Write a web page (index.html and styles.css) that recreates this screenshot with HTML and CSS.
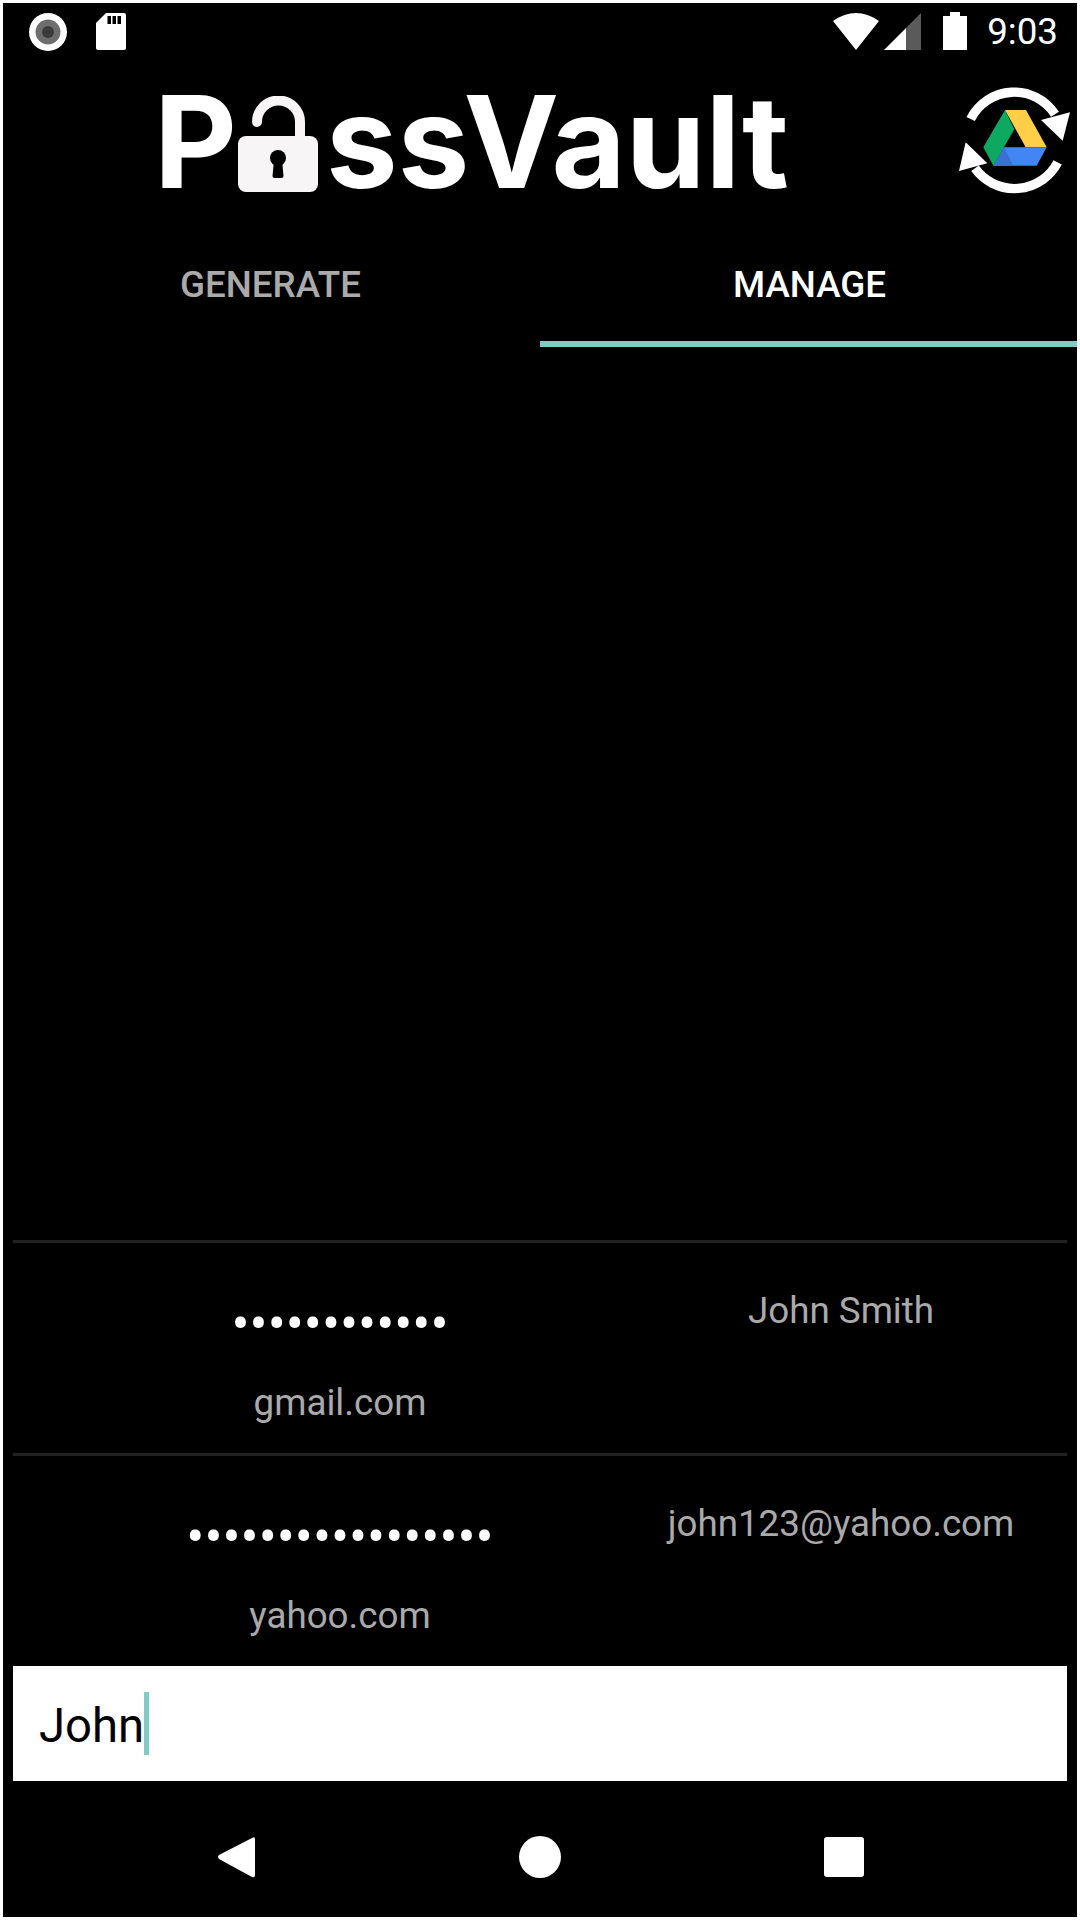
FILE: index.html
```html
<!DOCTYPE html>
<html lang="en">

<head>
    <meta charset="UTF-8">
    <title>PassVault</title>
    <link rel="stylesheet" href="styles.css">
</head>

<body>
    <div class="screen">

        <div class="status-bar">
            <svg class="icon-record" width="38" height="38" viewBox="0 0 38 38">
                <circle cx="19" cy="19" r="19" fill="#fff" />
                <circle cx="19" cy="19" r="12.5" fill="#6e6e6e" />
                <circle cx="19" cy="19" r="6" fill="#3a3a3a" />
            </svg>
            <svg class="icon-sd" width="30" height="37" viewBox="0 0 30 37">
                <path d="M10 0H28Q30 0 30 2V35Q30 37 28 37H2Q0 37 0 35V10Z" fill="#fff" />
                <path d="M11.5 3h3.5v8h-3.5zM16.5 3h3.5v8h-3.5zM21.5 3h3.5v8h-3.5z" fill="#000" />
            </svg>
            <svg class="icon-wifi" width="46" height="37" viewBox="0 0 46 37">
                <path d="M0 8Q23 -8 46 8L23 37Z" fill="#fff" />
            </svg>
            <svg class="icon-signal" width="37" height="37" viewBox="0 0 37 37">
                <path d="M0 37L22 15V37Z" fill="#fff" />
                <path d="M22 15L37 0V37H22Z" fill="#5a5a5a" />
            </svg>
            <svg class="icon-battery" width="24" height="38" viewBox="0 0 24 38">
                <path d="M7 0H17V4H24V38H0V4H7Z" fill="#fff" />
            </svg>
            <span class="clock">9:03</span>
        </div>

        <div class="header">
            <div class="logo">
                <span>P</span>
                <svg class="logo-lock" width="80" height="96" viewBox="0 0 80 96">
                    <path d="M19 26A21.5 21.5 0 0 1 62 26V44" fill="none" stroke="#f7f5f6" stroke-width="10" stroke-linecap="round" />
                    <rect y="40" width="80" height="56" rx="8" fill="#f7f5f6" />
                    <circle cx="40" cy="62" r="8" fill="#000" />
                    <path d="M36 64L34.5 80Q34.5 82 36.5 82H43.5Q45.5 82 45.5 80L44 64Z" fill="#000" />
                </svg>
                <span>ssVault</span>
            </div>
            <svg class="sync" width="118" height="113" viewBox="525 255 354 339">
                <path d="M572 357A146 146 0 0 1 825 343" fill="none" stroke="#fff" stroke-width="28" />
                <path d="M870 337L783 360L848 422Z" fill="#fff" />
                <path d="M833 487A146 146 0 0 1 585 505" fill="none" stroke="#fff" stroke-width="28" />
                <path d="M557 427L537 513L622 490Z" fill="#fff" />
                <path d="M675 330L610 442L640 497L703 388Z" fill="#0da960" />
                <path d="M675 330H738L800 442H737Z" fill="#ffcf48" />
                <path d="M672 442H800L770 497H640Z" fill="#4285f4" />
                <path d="M672 442L640 497H700Z" fill="#3b6fd4" />
            </svg>
        </div>

        <div class="tabs">
            <div class="tab tab-left">GENERATE</div>
            <div class="tab tab-right active">MANAGE</div>
        </div>

        <div class="list">
            <div class="row">
                <div class="row-left">
                    <div class="password">••••••••••••</div>
                    <div class="site">gmail.com</div>
                </div>
                <div class="login">John Smith</div>
            </div>
            <div class="row">
                <div class="row-left">
                    <div class="password">•••••••••••••••••</div>
                    <div class="site">yahoo.com</div>
                </div>
                <div class="login">john123@yahoo.com</div>
            </div>
        </div>

        <div class="search">
            <span class="search-text">John</span>
            <span class="caret"></span>
        </div>

        <div class="nav">
            <svg class="nav-back" width="38" height="42" viewBox="0 0 38 42">
                <path d="M35 2L2 19Q0 21 2 23L35 41Q38 42 38 39V3Q38 0 35 2Z" fill="#fff" />
            </svg>
            <div class="nav-home"></div>
            <div class="nav-recent"></div>
        </div>

    </div>
</body>

</html>
```

FILE: styles.css
```css
* {
    padding: 0;
    margin: 0;
    box-sizing: border-box;
}

body {
    width: 1080px;
    height: 1920px;
    padding: 3px;
    background: #fff;
    font-family: Roboto, sans-serif;
}

.screen {
    height: 1914px;
    display: flex;
    flex-direction: column;
    background: #000;
    overflow: hidden;
}

.status-bar {
    height: 72px;
    display: flex;
    align-items: flex-start;
    padding: 10px 19px 0 26px;
    color: #fff;
}

.icon-sd {
    margin-left: 29px;
}

.icon-wifi {
    margin-left: auto;
}

.icon-signal {
    margin-left: 5px;
}

.icon-battery {
    margin-left: 22px;
    margin-top: -1px;
}

.clock {
    margin-left: 20px;
    font-size: 36.75px;
    line-height: 37px;
}

.header {
    height: 155px;
    display: flex;
    justify-content: space-between;
    align-items: flex-start;
    padding: 10px 4px 0 151px;
}

.logo {
    display: flex;
    align-items: flex-start;
    margin-top: -8px;
    font-family: Inter, sans-serif;
    font-weight: 700;
    font-size: 128px;
    line-height: 130px;
    color: #fff;
}

.logo-lock {
    margin: 19px 8px 0 1px;
}

.tabs {
    height: 117px;
    display: grid;
    grid-template-columns: 537px 537px;
    font-size: 36.75px;
    font-weight: 500;
    color: #aaa;
}

.tab {
    text-align: center;
    padding-top: 34px;
    line-height: 42px;
}

.tab-left {
    padding-right: 2px;
}

.tab-right {
    padding-left: 2px;
}

.tab.active {
    color: #fff;
    border-bottom: 6px solid #80cbc4;
}

.list {
    flex: 1;
    display: flex;
    flex-direction: column;
    justify-content: flex-end;
    padding: 0 10px;
}

.row {
    height: 213px;
    display: grid;
    grid-template-columns: 654px 348px;
    border-top: 3px solid #222;
    font-size: 36.75px;
    line-height: 42px;
    color: #aaa;
    text-align: center;
}

.password {
    margin-top: 60px;
    color: #fff;
    font-size: 53.6px;
    white-space: nowrap;
}

.site {
    margin-top: 37px;
}

.login {
    margin-top: 47px;
    white-space: nowrap;
}

.search {
    height: 115px;
    margin: 0 10px;
    display: flex;
    align-items: flex-start;
    padding: 26px 0 0 26px;
    background: #fff;
    color: #000;
}

.search-text {
    margin-top: 4px;
    font-size: 47.25px;
    line-height: 60px;
}

.caret {
    width: 5px;
    height: 63px;
    background: #80cbc4;
}

.nav {
    height: 136px;
    display: flex;
    align-items: flex-start;
    padding: 55px 0 0 214px;
}

.nav-home {
    width: 42px;
    height: 42px;
    margin-left: 264px;
    border-radius: 50%;
    background: #fff;
}

.nav-recent {
    width: 40px;
    height: 40px;
    margin: 1px 0 0 263px;
    border-radius: 3px;
    background: #fff;
}
```
